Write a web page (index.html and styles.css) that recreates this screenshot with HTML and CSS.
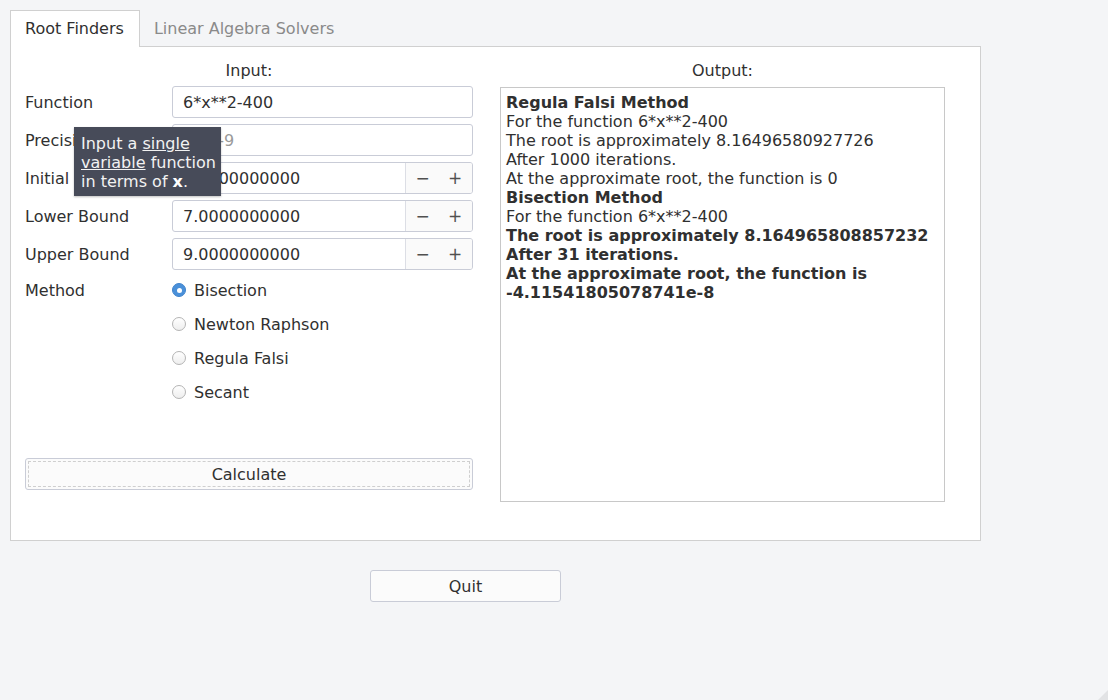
FILE: index.html
```html
<!DOCTYPE html>
<html>
<head>
<meta charset="utf-8">
<link rel="stylesheet" href="styles.css">
</head>
<body>
<div class="window">
  <div class="tabs">
    <div class="tab active">Root Finders</div>
    <div class="tab">Linear Algebra Solvers</div>
  </div>
  <div class="panel">
    <div class="col-left">
      <div class="heading">Input:</div>
      <div class="form">
        <div class="label">Function</div>
        <div class="field"><span class="value">6*x**2-400</span></div>

        <div class="label">Precision</div>
        <div class="field"><span class="value muted">1.0e-9</span></div>

        <div class="label">Initial Guess</div>
        <div class="field spin"><span class="value">8.0000000000</span><span class="spin-btns"><span class="sb">−</span><span class="sb">+</span></span></div>

        <div class="label">Lower Bound</div>
        <div class="field spin"><span class="value">7.0000000000</span><span class="spin-btns"><span class="sb">−</span><span class="sb">+</span></span></div>

        <div class="label">Upper Bound</div>
        <div class="field spin"><span class="value">9.0000000000</span><span class="spin-btns"><span class="sb">−</span><span class="sb">+</span></span></div>
      </div>
      <div class="method">
        <div class="label method-label">Method</div>
        <div class="radios">
          <div class="radio"><span class="dot checked"></span>Bisection</div>
          <div class="radio"><span class="dot"></span>Newton Raphson</div>
          <div class="radio"><span class="dot"></span>Regula Falsi</div>
          <div class="radio"><span class="dot"></span>Secant</div>
        </div>
      </div>
      <div class="btn calc"><span class="focus">Calculate</span></div>
    </div>
    <div class="col-right">
      <div class="heading">Output:</div>
      <div class="output">
        <div class="line b">Regula Falsi Method</div>
        <div class="line">For the function 6*x**2-400</div>
        <div class="line">The root is approximately 8.16496580927726</div>
        <div class="line">After 1000 iterations.</div>
        <div class="line">At the approximate root, the function is 0</div>
        <div class="line b">Bisection Method</div>
        <div class="line">For the function 6*x**2-400</div>
        <div class="line b">The root is approximately 8.164965808857232</div>
        <div class="line b">After 31 iterations.</div>
        <div class="line b">At the approximate root, the function is</div>
        <div class="line b">-4.11541805078741e-8</div>
      </div>
    </div>
  </div>
  <div class="bottom">
    <div class="btn quit">Quit</div>
  </div>
  <div class="tooltip">Input a <u>single</u><br><u>variable</u> function<br>in terms of <b>x</b>.</div>
  <div class="grip"></div>
</div>
</body>
</html>
```
FILE: styles.css
```css
html, body {
  margin: 0;
  padding: 0;
}
body {
  background: #f4f5f7;
  font-family: "DejaVu Sans", sans-serif;
  font-size: 16px;
  line-height: 19px;
  color: #303030;
}
.window {
  position: relative;
  width: 1108px;
  height: 700px;
  box-sizing: border-box;
  padding: 10px;
  overflow: hidden;
}
.tabs {
  display: flex;
  align-items: flex-end;
  position: relative;
  z-index: 2;
}
.tab {
  height: 36px;
  line-height: 37px;
  padding: 0 15px 0 14px;
  color: #8a8a8a;
  box-sizing: content-box;
}
.tab.active {
  background: #ffffff;
  color: #303030;
  border: 1px solid #d0d0d0;
  border-bottom: none;
  margin-bottom: -1px;
  height: 36px;
  line-height: 36px;
}
.tab + .tab {
  padding-left: 14px;
}
.panel {
  position: relative;
  z-index: 1;
  width: 971px;
  height: 495px;
  box-sizing: border-box;
  background: #ffffff;
  border: 1px solid #d0d0d0;
  padding: 14px 0 0 14px;
  display: flex;
  gap: 27px;
  align-items: flex-start;
}
.col-left {
  width: 448px;
  display: flex;
  flex-direction: column;
}
.col-right {
  width: 445px;
  display: flex;
  flex-direction: column;
}
.heading {
  text-align: center;
  height: 19px;
  margin-bottom: 6px;
}
.col-right .heading {
  margin-bottom: 7px;
}
.form {
  display: grid;
  grid-template-columns: 147px 301px;
  grid-auto-rows: 32px;
  row-gap: 6px;
}
.label {
  display: flex;
  align-items: center;
  white-space: nowrap;
}
.field {
  display: flex;
  align-items: center;
  box-sizing: border-box;
  border: 1px solid #c9ccd7;
  border-radius: 3px;
  background: #ffffff;
  overflow: hidden;
}
.value {
  flex: 1;
  padding-left: 10px;
  white-space: nowrap;
}
.value.muted {
  color: #9a9a9a;
}
.spin-btns {
  display: flex;
  height: 100%;
  border-left: 1px solid #dcdee5;
  background: #fafafa;
}
.sb {
  width: 33px;
  display: flex;
  align-items: center;
  justify-content: center;
  color: #505050;
  font-size: 17px;
}
.sb + .sb {
  width: 32px;
  padding-right: 1px;
}
.method {
  display: grid;
  grid-template-columns: 147px 301px;
  margin-top: 8px;
}
.method-label {
  height: 24px;
  align-items: center;
}
.radios {
  display: flex;
  flex-direction: column;
  gap: 10px;
}
.radio {
  height: 24px;
  display: flex;
  align-items: center;
  gap: 8px;
}
.dot {
  width: 12px;
  height: 12px;
  border-radius: 50%;
  border: 1px solid #b4b4b4;
  background: linear-gradient(#ffffff, #eeeeee);
  display: flex;
  align-items: center;
  justify-content: center;
}
.dot.checked {
  background: #4a90d9;
  border-color: #3f83cc;
}
.dot.checked::after {
  content: "";
  width: 5px;
  height: 5px;
  border-radius: 50%;
  background: #ffffff;
}
.btn {
  box-sizing: border-box;
  height: 32px;
  border: 1px solid #c9ccd7;
  border-radius: 3px;
  background: #fbfbfb;
  display: flex;
  align-items: center;
  justify-content: center;
}
.calc {
  width: 448px;
  margin-top: 54px;
  padding: 2px;
}
.focus {
  flex: 1;
  align-self: stretch;
  display: flex;
  align-items: center;
  justify-content: center;
  border: 1px dashed #cfcfcf;
}
.output {
  height: 415px;
  box-sizing: border-box;
  border: 1px solid #c8c8c8;
  padding: 5px;
  background: #ffffff;
}
.line {
  white-space: nowrap;
}
.line.b {
  font-weight: bold;
}
.bottom {
  margin-top: 29px;
  padding-left: 360px;
}
.quit {
  width: 191px;
}
.tooltip {
  position: absolute;
  left: 74px;
  top: 127px;
  width: 147px;
  height: 69px;
  box-sizing: border-box;
  padding: 7px 0 0 7px;
  background: #474b59;
  color: #f2f2f2;
  white-space: nowrap;
  z-index: 5;
  box-shadow: 0 1px 2px rgba(0,0,0,0.25);
}
.tooltip b {
  color: #ffffff;
}
.grip {
  position: absolute;
  right: 0;
  bottom: 0;
  width: 0;
  height: 0;
  border-left: 10px solid transparent;
  border-bottom: 10px solid #e2e3e5;
}
```
